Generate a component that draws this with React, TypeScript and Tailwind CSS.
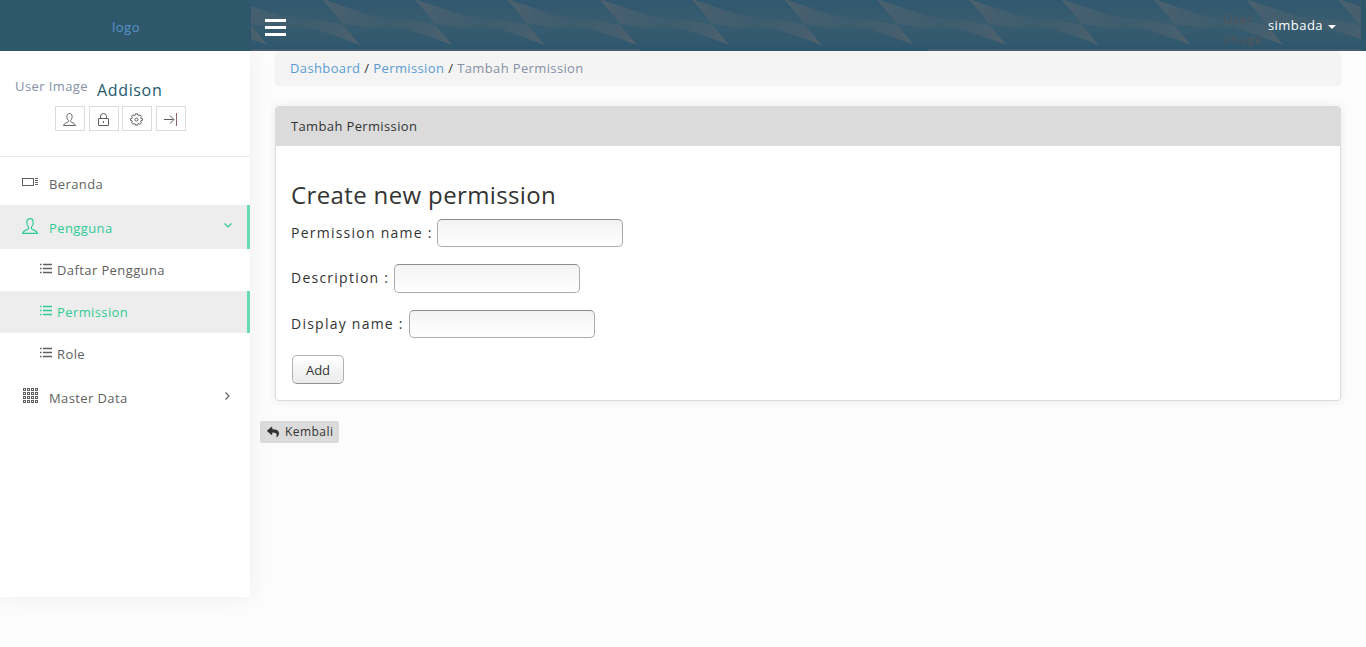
import React from "react";
import { FaReply } from "react-icons/fa";

type IconProps = { className?: string };

function UserIcon({ className }: IconProps) {
  return (
    <svg className={className} viewBox="0 0 16 16" fill="none" stroke="currentColor" strokeWidth="1.150">
      <path d="M8 .6C5.900.6 4.800 2 4.800 4.300c0 2.200.8 3.900 1.800 4.800v1.600c-.5 1-5.200 1.300-6 4.700h14.800c-.8-3.400-5.500-3.700-6-4.700V9.100c1-.9 1.800-2.600 1.800-4.800C11.200 2 10.100.6 8 .6Z" />
    </svg>
  );
}

function LockIcon({ className }: IconProps) {
  return (
    <svg className={className} viewBox="0 0 13 13" fill="none" stroke="currentColor" strokeWidth="1">
      <rect x="1.500" y="5.500" width="10" height="7" rx=".5" />
      <path d="M3.500 5.500V3.500a3 3 0 0 1 6 0v2M6.500 8v2" />
    </svg>
  );
}

function GearIcon({ className }: IconProps) {
  return (
    <svg className={className} viewBox="0 0 16 16" fill="none" stroke="currentColor" strokeWidth="1.200">
      <path d="M6.700 1h2.600l.4 1.900 1 .4 1.700-1 1.700 1.700-1 1.700.4 1 1.900.4v2l-1.900.4-.4 1 1 1.700-1.700 1.700-1.700-1-1 .4L9.300 15H6.700l-.4-1.700-1-.4-1.700 1-1.700-1.700 1-1.700-.4-1L.6 9.100v-2l1.900-.4.4-1-1-1.700 1.700-1.700 1.700 1 1-.4Z" />
      <circle cx="8" cy="8.100" r="1.900" />
    </svg>
  );
}

function ExitIcon({ className }: IconProps) {
  return (
    <svg className={className} viewBox="0 0 14 13" fill="none" stroke="currentColor" strokeWidth="1">
      <path d="M0 6.500h9.500M6 2.500l4 4-4 4" />
      <path d="M12.500 0v13" stroke="#8d6767" />
    </svg>
  );
}

function PanelIcon({ className }: IconProps) {
  return (
    <svg className={className} viewBox="0 0 16 9" fill="none" stroke="currentColor" strokeWidth="1" shapeRendering="crispEdges">
      <path d="M.5.500h11v7H.5ZM13 .5h3M13 2.500h3M13 4.500h3M13 6.500h3" />
    </svg>
  );
}

function ListIcon({ className }: IconProps) {
  return (
    <svg className={className} viewBox="0 0 12 11" stroke="currentColor" strokeWidth="1.300">
      <path d="M0 1.500h1.500M0 5.500h1.500M0 9.500h1.500" />
      <path d="M3 1.500h9M3 5.500h9M3 9.500h9" />
    </svg>
  );
}

function GridIcon({ className }: IconProps) {
  return (
    <svg className={className} viewBox="0 0 15 15" fill="none" stroke="currentColor" strokeWidth="1">
      {[0, 4, 8, 12].map((y) =>
        [0, 4, 8, 12].map((x) => <rect key={`${x}-${y}`} x={x + 0.5} y={y + 0.5} width="2" height="2" />)
      )}
    </svg>
  );
}

function HeaderPattern() {
  const tiles = Array.from({ length: 15 }, (_, i) => -112.65 + i * 92.35);
  return (
    <svg className="absolute inset-0 h-[51px] w-full" aria-hidden="true">
      <defs>
        <linearGradient id="base" x1="0" y1="0" x2="0" y2="1">
          <stop offset="0" stopColor="#30586f" />
          <stop offset=".45" stopColor="#395c6f" />
          <stop offset=".75" stopColor="#33596e" />
          <stop offset="1" stopColor="#2c556c" />
        </linearGradient>
        <linearGradient id="streak" gradientUnits="userSpaceOnUse" x1="0" y1="0" x2="129" y2="45">
          <stop offset="0" stopColor="#50636f" stopOpacity=".9" />
          <stop offset=".2" stopColor="#4a606f" stopOpacity=".75" />
          <stop offset=".5" stopColor="#405e6e" stopOpacity=".6" />
          <stop offset=".8" stopColor="#4a606e" stopOpacity=".7" />
          <stop offset="1" stopColor="#53646e" stopOpacity=".9" />
        </linearGradient>
        <filter id="soft" x="-5%" y="-5%" width="110%" height="110%">
          <feGaussianBlur stdDeviation=".6" />
        </filter>
      </defs>
      <rect width="1110" height="51" fill="url(#base)" />
      <g filter="url(#soft)">
        {tiles.map((x) => (
          <path key={x} transform={`translate(${x} 0)`} d="M-1 -1 L8 2 L50 16 L84 20 L112 25 L120 34 L129 45 L108 37 L78 27 L45 27 L20 24 L12 14Z" fill="url(#streak)" />
        ))}
      </g>
      <path d="M0 50H389M677 50H1110" stroke="#506273" strokeWidth="1.600" />
      <rect x="1110" width="6" height="51" fill="#2d566b" />
    </svg>
  );
}

const quickActions = [
  { label: "Profile", icon: <UserIcon className="mr-px h-[13px] w-[13px]" /> },
  { label: "Lock", icon: <LockIcon className="h-[13px] w-[13px]" /> },
  { label: "Settings", icon: <GearIcon className="mr-[2px] h-[13px] w-[13px]" /> },
  { label: "Exit", icon: <ExitIcon className="h-[13px] w-[14px]" /> },
];

function SubItem({ label, active = false }: { label: string; active?: boolean }) {
  return (
    <a
      className={
        active
          ? "flex h-[42px] items-center border-r-3 border-[#69dbb2] bg-[#ededed] pl-10 text-[#2fcb95]"
          : "flex h-[42px] items-center pl-10 text-[#5f5f5f]"
      }
    >
      <ListIcon className="mr-[5px] mb-[3px] h-[11px] w-3" />
      <span className="pt-[2px]">{label}</span>
    </a>
  );
}

function Sidebar() {
  return (
    <aside className="relative h-[546px] w-[250px] shrink-0 bg-white tracking-[0.400px] shadow-[0_0_20px_rgba(0,0,0,0.06)]">
      <div className="h-[106px] border-b border-[#ebebeb] pt-[25px]">
        <div className="flex h-[30px] items-start pl-[15px]">
          <span className="w-[82px] leading-[21px] text-[#8591a5]">User Image</span>
          <span className="pt-[2px] text-[16px] leading-6 tracking-[0.650px] text-[#23586e]">Addison</span>
        </div>
        <div className="flex gap-[3.700px] pl-[55px]">
          {quickActions.map((a) => (
            <a key={a.label} aria-label={a.label} className="flex h-[25px] w-[30px] items-center justify-center border border-[#dcdcdc] pt-px text-[#5c5c5c]">
              {a.icon}
            </a>
          ))}
        </div>
      </div>
      <nav className="pt-[5px]">
        <a className="flex h-[43px] items-center pl-[22px] text-[#5f5f5f]">
          <PanelIcon className="mr-[11px] mb-[3px] h-[9px] w-4" />
          <span className="pt-[3px]">Beranda</span>
        </a>
        <a className="flex h-11 items-center border-r-3 border-[#69dbb2] bg-[#ededed] pl-[22px] text-[#2fcb95]">
          <UserIcon className="mr-[11px] mb-[2px] h-4 w-4" />
          <span className="pt-[3px]">Pengguna</span>
          <svg className="mr-[15px] mb-[3px] ml-auto h-[5px] w-2" viewBox="0 0 8 5" fill="none" stroke="currentColor" strokeWidth="1.200">
            <path d="M.5.5 4 4 7.500.5" />
          </svg>
        </a>
        <SubItem label="Daftar Pengguna" />
        <SubItem label="Permission" active />
        <SubItem label="Role" />
        <a className="flex h-11 items-center pl-[23px] text-[#5f5f5f]">
          <GridIcon className="mr-[11px] mb-[3px] h-[15px] w-[15px]" />
          <span className="pt-[3px]">Master Data</span>
          <svg className="mr-[20px] mb-[2px] ml-auto h-2 w-[5px]" viewBox="0 0 5 8" fill="none" stroke="currentColor" strokeWidth="1.200">
            <path d="M.5.5 4 4 .5 7.500" />
          </svg>
        </a>
      </nav>
    </aside>
  );
}

function Field({ label, rowClass }: { label: string; rowClass: string }) {
  return (
    <label className={rowClass}>
      <span className="pb-[2px] text-[14px] tracking-[1.240px] whitespace-pre">{label} : </span>
      <input className="h-full w-[186px] rounded-[5px] border border-[#ababab] border-t-[#8d8d8d] bg-linear-to-b from-[#f3f3f3] to-white px-2 outline-none" />
    </label>
  );
}

export default function App() {
  return (
    <div className="h-[647px] overflow-hidden bg-[#fcfcfc] font-['Open_Sans',sans-serif] text-[13px] text-[#333]">
      <header className="relative z-10 flex h-[51px] bg-[#2e576b]">
        <div className="flex w-[251px] items-center justify-center pt-[5px] pl-px tracking-[0.5px] text-[#5b93c9]">logo</div>
        <div className="relative flex flex-1 items-start">
          <HeaderPattern />
          <button aria-label="Menu" className="relative mt-[19px] ml-[14px] flex flex-col gap-1">
            <span className="h-[3px] w-[21px] bg-white" />
            <span className="h-[3px] w-[21px] bg-white" />
            <span className="h-[3px] w-[21px] bg-white" />
          </button>
          <div className="relative mr-[30px] ml-auto flex tracking-[0.460px]">
            <span className="mt-[9px] w-[45px] leading-5 text-[#50565b]">User Image</span>
            <span className="pt-4 leading-[18px] text-white">simbada</span>
            <span className="mt-[25px] ml-[5px] h-0 w-0 border-x-4 border-t-4 border-x-transparent border-t-white" />
          </div>
        </div>
      </header>
      <div className="flex items-start">
        <Sidebar />
        <main className="min-w-0 flex-1 pr-[25px]">
          <div className="ml-[25px] flex h-[35px] items-center gap-[3.900px] rounded-[4px] bg-[#f4f4f4] pl-[15px] tracking-[0.370px]">
            <a className="text-[#5b9bd1]">Dashboard</a>
            <span>/</span>
            <a className="text-[#5b9bd1]">Permission</a>
            <span>/</span>
            <span className="text-[#8591a5]">Tambah Permission</span>
          </div>
          <section className="mt-5 ml-[25px] h-[295px] overflow-hidden rounded-[4px] border border-[#dbdbdb] bg-white shadow-[0_0_8px_rgba(0,0,0,0.08)]">
            <h2 className="flex h-[39px] items-center bg-[#dbdbdb] pl-[15px] tracking-[0.360px]">Tambah Permission</h2>
            <div className="pt-[31px] pl-[15px]">
              <h1 className="text-[24px] leading-9 tracking-[0.370px]">Create new permission</h1>
              <Field label="Permission name" rowClass="mt-[6px] flex h-7 items-center" />
              <Field label="Description" rowClass="mt-[17px] flex h-[29px] items-center" />
              <Field label="Display name" rowClass="mt-[17px] flex h-7 items-center" />
              <button className="mt-[17px] ml-px flex h-[29px] w-[52px] items-center justify-center rounded-[5px] border border-[#b1b1b1] border-b-[#929292] bg-linear-to-b from-white to-[#ebebeb] pt-[3px]">Add</button>
            </div>
          </section>
          <a className="mt-5 ml-[10px] inline-flex h-[22px] w-[79px] items-center rounded-[2px] bg-[#dbdbdb] pl-[7px] text-[12px] tracking-[0.450px]">
            <FaReply className="mr-[6px] h-3 w-3" />
            Kembali
          </a>
        </main>
      </div>
    </div>
  );
}
